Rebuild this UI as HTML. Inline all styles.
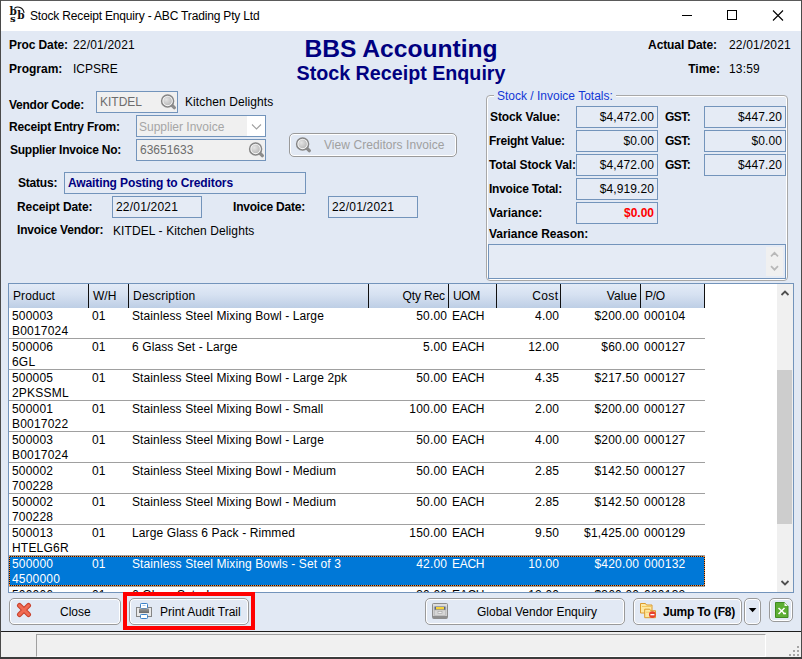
<!DOCTYPE html>
<html><head><meta charset="utf-8">
<style>
html,body{margin:0;padding:0;}
body{width:802px;height:659px;position:relative;overflow:hidden;background:#e2e9f4;font-family:"Liberation Sans",sans-serif;font-size:12px;color:#000;}
.a{position:absolute;white-space:nowrap;line-height:14px;}
.b{font-weight:bold;}
.box{position:absolute;box-sizing:border-box;border:1px solid #7394bb;background:#e5ebf5;line-height:20px;white-space:nowrap;padding:0 4px;}
.dis{background:#f0f0f0;color:#6d6d6d;}
.r{text-align:right;}
.navy{color:#000080;}
#title{position:absolute;left:1px;top:1px;width:800px;height:30px;background:#fff;}
.btn{position:absolute;box-sizing:border-box;border:1px solid #9a9a9a;border-radius:5px;background:#e2e9f4;box-shadow:inset 0 0 0 1px #fff;line-height:14px;white-space:nowrap;}
.mag{position:absolute;}
#grid{position:absolute;left:8px;top:283px;width:786px;height:310px;box-sizing:border-box;border:1px solid #7394bb;background:#fff;overflow:hidden;}
#ghead{position:absolute;left:0;top:0;width:696px;height:24px;background:linear-gradient(#e3ebf7,#d6e1f1 45%,#bdcee5);}
.sep{position:absolute;top:0;width:1px;height:24px;background:#101010;}
.row{position:absolute;left:0;width:696px;height:31px;box-sizing:border-box;border-bottom:1px solid #a0a0a0;}
.row.sel{background:#0078d7;color:#fff;}
.c{position:absolute;white-space:nowrap;line-height:15px;letter-spacing:0.11px;}
#sb{position:absolute;left:768px;top:0;width:16px;height:308px;background:#f0f0f0;}
#thumb{position:absolute;left:0;width:15px;background:#cdcdcd;}
.ln{position:absolute;}
</style></head><body>
<div id="title"></div>
<svg width="0" height="0" style="position:absolute"><defs><radialGradient id="mg" cx="35%" cy="35%" r="75%"><stop offset="0" stop-color="#e4e4e4"/><stop offset="1" stop-color="#b8b8b8"/></radialGradient></defs></svg>
<svg class="mag" style="left:8px;top:4px" width="20" height="22" viewBox="0 0 20 22"><g font-family="DejaVu Serif,Liberation Serif,serif" font-weight="bold" fill="#111"><text x="1.400" y="10.700" font-size="10.500">b</text><text x="1.900" y="18.200" font-size="10">s</text><text x="9.300" y="15.200" font-size="10.500">b</text></g><path d="M6.300 4.400 C9.500 1.800 15 3 16.100 8.800" fill="none" stroke="#111" stroke-width="1.100"/></svg>
<div class="a" id="ttext" style="left:30px;top:8px;font-size:12px;line-height:16px;letter-spacing:-0.17px;">Stock Receipt Enquiry - ABC Trading Pty Ltd</div>
<svg class="mag" style="left:661px;top:1px" width="140" height="30" viewBox="0 0 140 30"><path d="M21 14.5h10" stroke="#000" stroke-width="1"/><rect x="66.5" y="9.5" width="9" height="9" fill="none" stroke="#000" stroke-width="1"/><path d="M112 9.500l10 10M122 9.500l-10 10" stroke="#000" stroke-width="1.100"/></svg>
<div class="a b" style="left:9px;top:38px;letter-spacing:-0.1px;">Proc Date:</div>
<div class="a " style="left:73px;top:38px;letter-spacing:0.18px;">22/01/2021</div>
<div class="a b" style="left:9px;top:62px;">Program:</div>
<div class="a " style="left:73px;top:62px;">ICPSRE</div>
<div class="a b navy" id="h1" style="left:0;width:802px;text-align:center;top:35.3px;font-size:24.6px;line-height:28px;">BBS Accounting</div>
<div class="a b navy" id="h2" style="left:0;width:802px;text-align:center;top:60.700px;font-size:19.700px;line-height:24px;">Stock Receipt Enquiry</div>
<div class="a b" style="right:85px;top:38px;letter-spacing:-0.1px;margin-right:0.1px;">Actual Date:</div>
<div class="a " style="left:729px;top:38px;letter-spacing:0.18px;">22/01/2021</div>
<div class="a b" style="right:82px;top:62px;margin-right:0px;">Time:</div>
<div class="a " style="left:729px;top:62px;letter-spacing:0.15px;">13:59</div>
<div class="a b" style="left:9px;top:98px;letter-spacing:-0.25px;">Vendor Code:</div>
<div class="box dis" style="left:96px;top:91px;width:82px;height:22px;padding-left:3px;">KITDEL</div>
<svg class="mag" style="left:160px;top:93px" width="18" height="18" viewBox="0 0 18 18"><line x1="11.800" y1="12.100" x2="14.300" y2="14.600" stroke="#8c8c8c" stroke-width="3.400" stroke-linecap="round"/><circle cx="7.600" cy="7.900" r="6" fill="#fbfbfb" stroke="#868686" stroke-width="1.500"/><circle cx="7.600" cy="7.900" r="4.300" fill="url(#mg)"/></svg>
<div class="a " style="left:185px;top:95px;letter-spacing:0.1px;">Kitchen Delights</div>
<div class="a b" style="left:9px;top:120px;letter-spacing:-0.2px;">Receipt Entry From:</div>
<div class="box dis" style="left:136px;top:115px;width:130px;height:22px;padding-left:2px;color:#a6a6a6;line-height:22px;">Supplier Invoice</div>
<div class="ln" style="left:247px;top:116px;width:18px;height:20px;background:#fff;"></div><svg class="mag" style="left:247px;top:116px" width="18" height="20"><path d="M5 8.500l4.500 4.500 4.500-4.500" fill="none" stroke="#a0a0a0" stroke-width="1.100"/></svg>
<div class="a b" style="left:10px;top:143px;letter-spacing:-0.25px;">Supplier Invoice No:</div>
<div class="box dis" style="left:136px;top:139px;width:130px;height:22px;padding-left:3px;">63651633</div>
<svg class="mag" style="left:248px;top:141px" width="18" height="18" viewBox="0 0 18 18"><line x1="11.800" y1="12.100" x2="14.300" y2="14.600" stroke="#8c8c8c" stroke-width="3.400" stroke-linecap="round"/><circle cx="7.600" cy="7.900" r="6" fill="#fbfbfb" stroke="#868686" stroke-width="1.500"/><circle cx="7.600" cy="7.900" r="4.300" fill="url(#mg)"/></svg>
<div class="btn" style="left:289px;top:133px;width:168px;height:24px;"></div>
<svg class="mag" style="left:295px;top:136px" width="18" height="18" viewBox="0 0 18 18"><line x1="11.800" y1="12.100" x2="14.300" y2="14.600" stroke="#8c8c8c" stroke-width="3.400" stroke-linecap="round"/><circle cx="7.600" cy="7.900" r="6" fill="#fbfbfb" stroke="#868686" stroke-width="1.500"/><circle cx="7.600" cy="7.900" r="4.300" fill="url(#mg)"/></svg>
<div class="a " style="left:324px;top:138px;letter-spacing:0.06px;color:#a0a0a0;">View Creditors Invoice</div>
<div class="a b" style="left:18px;top:176px;letter-spacing:-0.2px;">Status:</div>
<div class="box b navy" style="left:64px;top:172px;width:242px;height:22px;letter-spacing:-0.12px;padding-left:3px;">Awaiting Posting to Creditors</div>
<div class="a b" style="left:17px;top:200px;letter-spacing:-0.1px;">Receipt Date:</div>
<div class="box " style="left:112px;top:196px;width:90px;height:22px;letter-spacing:0.2px;padding-left:3px;">22/01/2021</div>
<div class="a b" style="left:233px;top:200px;letter-spacing:-0.2px;">Invoice Date:</div>
<div class="box " style="left:328px;top:196px;width:90px;height:22px;letter-spacing:0.2px;padding-left:3px;">22/01/2021</div>
<div class="a b" style="left:17px;top:223px;letter-spacing:-0.2px;">Invoice Vendor:</div>
<div class="a " style="left:113px;top:224px;letter-spacing:0.1px;">KITDEL - Kitchen Delights</div>
<div class="ln" style="left:486px;top:95px;width:302px;height:186px;box-sizing:border-box;border:1px solid #a8a8a8;border-radius:4px;box-shadow:inset 0 0 0 1px #fff;"></div>
<div class="a" style="left:494px;top:89px;padding:0 3px;background:#e2e9f4;color:#1238d6;">Stock / Invoice Totals:</div>
<div class="a b" style="left:490px;top:110px;letter-spacing:-0.1px;">Stock Value:</div>
<div class="box r" style="left:576px;top:106px;width:82px;height:22px;letter-spacing:0.1px;padding-right:3px;">$4,472.00</div>
<div class="a b" style="left:665px;top:110px;letter-spacing:-0.5px;">GST:</div>
<div class="box r" style="left:704px;top:106px;width:82px;height:22px;letter-spacing:0.1px;padding-right:3px;">$447.20</div>
<div class="a b" style="left:489px;top:134px;letter-spacing:-0.25px;">Freight Value:</div>
<div class="box r" style="left:576px;top:130px;width:82px;height:22px;letter-spacing:0.1px;padding-right:3px;">$0.00</div>
<div class="a b" style="left:665px;top:134px;letter-spacing:-0.5px;">GST:</div>
<div class="box r" style="left:704px;top:130px;width:82px;height:22px;letter-spacing:0.1px;padding-right:3px;">$0.00</div>
<div class="a b" style="left:489px;top:158px;letter-spacing:-0.1px;">Total Stock Val:</div>
<div class="box r" style="left:576px;top:154px;width:82px;height:22px;letter-spacing:0.1px;padding-right:3px;">$4,472.00</div>
<div class="a b" style="left:665px;top:158px;letter-spacing:-0.5px;">GST:</div>
<div class="box r" style="left:704px;top:154px;width:82px;height:22px;letter-spacing:0.1px;padding-right:3px;">$447.20</div>
<div class="a b" style="left:489px;top:182px;letter-spacing:-0.25px;">Invoice Total:</div>
<div class="box r" style="left:576px;top:178px;width:82px;height:22px;letter-spacing:0.1px;padding-right:3px;">$4,919.20</div>
<div class="a b" style="left:489px;top:206px;">Variance:</div>
<div class="box r" style="left:576px;top:202px;width:82px;height:22px;color:#ff0000;font-weight:bold;padding-right:3px;">$0.00</div>
<div class="a b" style="left:489px;top:227px;letter-spacing:-0.05px;">Variance Reason:</div>
<div class="box " style="left:488px;top:244px;width:298px;height:35px;"></div>
<div class="ln" style="left:766px;top:247px;width:17px;height:29px;background:#f0f0f0;"></div><svg class="mag" style="left:766px;top:247px" width="17" height="29"><path d="M5 9.300l3.500-3.500 3.500 3.500M5 19.200l3.500 3.500 3.500-3.500" fill="none" stroke="#b8b8b8" stroke-width="1.700"/></svg>
<div id="grid"><div id="ghead"></div>
<div class="sep" style="left:79px"></div><div class="sep" style="left:119px"></div><div class="sep" style="left:359px"></div><div class="sep" style="left:439px"></div><div class="sep" style="left:487px"></div><div class="sep" style="left:551px"></div><div class="sep" style="left:631px"></div><div class="sep" style="left:695px"></div><div class="c" style="left:4px;top:5px;letter-spacing:0.1px;">Product</div><div class="c" style="left:84px;top:5px;letter-spacing:0px;">W/H</div><div class="c" style="left:124px;top:5px;letter-spacing:0.22px;">Description</div><div class="c" style="right:348.15px;top:5px;letter-spacing:-0.15px;">Qty Rec</div><div class="c" style="left:444px;top:5px;letter-spacing:-0.4px;">UOM</div><div class="c" style="right:234.6px;top:5px;letter-spacing:0.4px;">Cost</div><div class="c" style="right:155.9px;top:5px;letter-spacing:0.1px;">Value</div><div class="c" style="left:636px;top:5px;letter-spacing:-0.3px;">P/O</div>
<div class="row" style="top:24px;"><div class="c" style="left:3px;top:1px;letter-spacing:0.2px;">500003<br>B0017024</div><div class="c" style="left:83px;top:1px;letter-spacing:0.2px;">01</div><div class="c" style="left:123px;top:1px;">Stainless Steel Mixing Bowl - Large</div><div class="c" style="right:257.8px;top:1px;letter-spacing:0.2px;">50.00</div><div class="c" style="left:443px;top:1px;letter-spacing:-0.3px;">EACH</div><div class="c" style="right:145.8px;top:1px;letter-spacing:0.2px;">4.00</div><div class="c" style="right:65.8px;top:1px;letter-spacing:0.2px;">$200.00</div><div class="c" style="left:635px;top:1px;letter-spacing:0.25px;">000104</div></div>
<div class="row" style="top:55px;"><div class="c" style="left:3px;top:1px;letter-spacing:0.2px;">500006<br>6GL</div><div class="c" style="left:83px;top:1px;letter-spacing:0.2px;">01</div><div class="c" style="left:123px;top:1px;">6 Glass Set - Large</div><div class="c" style="right:257.8px;top:1px;letter-spacing:0.2px;">5.00</div><div class="c" style="left:443px;top:1px;letter-spacing:-0.3px;">EACH</div><div class="c" style="right:145.8px;top:1px;letter-spacing:0.2px;">12.00</div><div class="c" style="right:65.8px;top:1px;letter-spacing:0.2px;">$60.00</div><div class="c" style="left:635px;top:1px;letter-spacing:0.25px;">000127</div></div>
<div class="row" style="top:86px;"><div class="c" style="left:3px;top:1px;letter-spacing:0.2px;">500005<br>2PKSSML</div><div class="c" style="left:83px;top:1px;letter-spacing:0.2px;">01</div><div class="c" style="left:123px;top:1px;">Stainless Steel Mixing Bowl - Large 2pk</div><div class="c" style="right:257.8px;top:1px;letter-spacing:0.2px;">50.00</div><div class="c" style="left:443px;top:1px;letter-spacing:-0.3px;">EACH</div><div class="c" style="right:145.8px;top:1px;letter-spacing:0.2px;">4.35</div><div class="c" style="right:65.8px;top:1px;letter-spacing:0.2px;">$217.50</div><div class="c" style="left:635px;top:1px;letter-spacing:0.25px;">000127</div></div>
<div class="row" style="top:117px;"><div class="c" style="left:3px;top:1px;letter-spacing:0.2px;">500001<br>B0017022</div><div class="c" style="left:83px;top:1px;letter-spacing:0.2px;">01</div><div class="c" style="left:123px;top:1px;">Stainless Steel Mixing Bowl - Small</div><div class="c" style="right:257.8px;top:1px;letter-spacing:0.2px;">100.00</div><div class="c" style="left:443px;top:1px;letter-spacing:-0.3px;">EACH</div><div class="c" style="right:145.8px;top:1px;letter-spacing:0.2px;">2.00</div><div class="c" style="right:65.8px;top:1px;letter-spacing:0.2px;">$200.00</div><div class="c" style="left:635px;top:1px;letter-spacing:0.25px;">000127</div></div>
<div class="row" style="top:148px;"><div class="c" style="left:3px;top:1px;letter-spacing:0.2px;">500003<br>B0017024</div><div class="c" style="left:83px;top:1px;letter-spacing:0.2px;">01</div><div class="c" style="left:123px;top:1px;">Stainless Steel Mixing Bowl - Large</div><div class="c" style="right:257.8px;top:1px;letter-spacing:0.2px;">50.00</div><div class="c" style="left:443px;top:1px;letter-spacing:-0.3px;">EACH</div><div class="c" style="right:145.8px;top:1px;letter-spacing:0.2px;">4.00</div><div class="c" style="right:65.8px;top:1px;letter-spacing:0.2px;">$200.00</div><div class="c" style="left:635px;top:1px;letter-spacing:0.25px;">000127</div></div>
<div class="row" style="top:179px;"><div class="c" style="left:3px;top:1px;letter-spacing:0.2px;">500002<br>700228</div><div class="c" style="left:83px;top:1px;letter-spacing:0.2px;">01</div><div class="c" style="left:123px;top:1px;">Stainless Steel Mixing Bowl - Medium</div><div class="c" style="right:257.8px;top:1px;letter-spacing:0.2px;">50.00</div><div class="c" style="left:443px;top:1px;letter-spacing:-0.3px;">EACH</div><div class="c" style="right:145.8px;top:1px;letter-spacing:0.2px;">2.85</div><div class="c" style="right:65.8px;top:1px;letter-spacing:0.2px;">$142.50</div><div class="c" style="left:635px;top:1px;letter-spacing:0.25px;">000127</div></div>
<div class="row" style="top:210px;"><div class="c" style="left:3px;top:1px;letter-spacing:0.2px;">500002<br>700228</div><div class="c" style="left:83px;top:1px;letter-spacing:0.2px;">01</div><div class="c" style="left:123px;top:1px;">Stainless Steel Mixing Bowl - Medium</div><div class="c" style="right:257.8px;top:1px;letter-spacing:0.2px;">50.00</div><div class="c" style="left:443px;top:1px;letter-spacing:-0.3px;">EACH</div><div class="c" style="right:145.8px;top:1px;letter-spacing:0.2px;">2.85</div><div class="c" style="right:65.8px;top:1px;letter-spacing:0.2px;">$142.50</div><div class="c" style="left:635px;top:1px;letter-spacing:0.25px;">000128</div></div>
<div class="row" style="top:241px;"><div class="c" style="left:3px;top:1px;letter-spacing:0.2px;">500013<br>HTELG6R</div><div class="c" style="left:83px;top:1px;letter-spacing:0.2px;">01</div><div class="c" style="left:123px;top:1px;">Large Glass 6 Pack - Rimmed</div><div class="c" style="right:257.8px;top:1px;letter-spacing:0.2px;">150.00</div><div class="c" style="left:443px;top:1px;letter-spacing:-0.3px;">EACH</div><div class="c" style="right:145.8px;top:1px;letter-spacing:0.2px;">9.50</div><div class="c" style="right:65.8px;top:1px;letter-spacing:0.2px;">$1,425.00</div><div class="c" style="left:635px;top:1px;letter-spacing:0.25px;">000129</div></div>
<div class="row sel" style="top:272px;"><svg class="mag" style="left:0;top:0" width="696" height="31" shape-rendering="crispEdges"><path d="M0 0.5H696M0 29.5H696M0.5 0V30M695.5 0V30" fill="none" stroke="#101820" stroke-width="1"/><path d="M0 0.5H696M0 29.5H696M0.5 0V30M695.5 0V30" fill="none" stroke="#ff8728" stroke-width="1" stroke-dasharray="1 1"/></svg><div class="c" style="left:3px;top:1px;letter-spacing:0.2px;">500000<br>4500000</div><div class="c" style="left:83px;top:1px;letter-spacing:0.2px;">01</div><div class="c" style="left:123px;top:1px;">Stainless Steel Mixing Bowls - Set of 3</div><div class="c" style="right:257.8px;top:1px;letter-spacing:0.2px;">42.00</div><div class="c" style="left:443px;top:1px;letter-spacing:-0.3px;">EACH</div><div class="c" style="right:145.8px;top:1px;letter-spacing:0.2px;">10.00</div><div class="c" style="right:65.8px;top:1px;letter-spacing:0.2px;">$420.00</div><div class="c" style="left:635px;top:1px;letter-spacing:0.25px;">000132</div></div>
<div class="row" style="top:303px;"><div class="c" style="left:3px;top:1px;letter-spacing:0.2px;">500006<br>6GL</div><div class="c" style="left:83px;top:1px;letter-spacing:0.2px;">01</div><div class="c" style="left:123px;top:1px;">6 Glass Set - Large</div><div class="c" style="right:257.8px;top:1px;letter-spacing:0.2px;">30.00</div><div class="c" style="left:443px;top:1px;letter-spacing:-0.3px;">EACH</div><div class="c" style="right:145.8px;top:1px;letter-spacing:0.2px;">12.00</div><div class="c" style="right:65.8px;top:1px;letter-spacing:0.2px;">$360.00</div><div class="c" style="left:635px;top:1px;letter-spacing:0.25px;">000132</div></div>
<div id="sb"><div id="thumb" style="top:86px;height:154px;"></div><svg class="mag" style="left:0;top:0" width="16" height="308"><path d="M4.500 11l3.500-3.500 3.500 3.500M4.500 297l3.500 3.500 3.500-3.500" fill="none" stroke="#505050" stroke-width="1.800"/></svg></div>
</div>
<div class="btn" style="left:9px;top:598px;width:112px;height:27px;"></div>
<svg class="mag" style="left:16px;top:602px" width="16" height="16" viewBox="0 0 16 16"><path d="M3.500 3.500l9 9M12.500 3.500l-9 9" stroke="#c8402c" stroke-width="5" stroke-linecap="round"/><path d="M3.500 3.500l9 9M12.500 3.500l-9 9" stroke="#f06a52" stroke-width="3" stroke-linecap="round"/></svg>
<div class="a " style="left:60px;top:605px;">Close</div>
<div class="ln" style="left:123px;top:592px;width:132px;height:38px;box-sizing:border-box;border:4px solid #ff0000;"></div>
<div class="btn" style="left:129px;top:598px;width:120px;height:27px;"></div>
<svg class="mag" style="left:135px;top:602px" width="18" height="17" viewBox="0 0 18 17"><defs><linearGradient id="pb" x1="0" y1="0" x2="0" y2="1"><stop offset="0" stop-color="#9a9a9a"/><stop offset="1" stop-color="#6a6a6a"/></linearGradient></defs><rect x="1.500" y="5.500" width="15" height="9" fill="#e9e9e9" stroke="#858585" stroke-width="1"/><rect x="5.500" y="1.500" width="7" height="5" rx="0.800" fill="#fff" stroke="#3a80c8" stroke-width="1"/><path d="M7.500 3.500h3" stroke="#a8ccf4" stroke-width="1"/><rect x="4" y="6.500" width="10" height="4.500" fill="url(#pb)"/><rect x="5.500" y="12.500" width="7" height="4" rx="0.800" fill="#fff" stroke="#3a80c8" stroke-width="1"/></svg>
<div class="a " style="left:160px;top:605px;">Print Audit Trail</div>
<div class="btn" style="left:425px;top:598px;width:200px;height:27px;"></div>
<svg class="mag" style="left:432px;top:603px" width="16" height="16" viewBox="0 0 16 16"><rect x="0.500" y="0.500" width="15" height="15" rx="1" fill="#cfcfcf" stroke="#8c8c8c"/><path d="M1 1h14v2.500H1z" fill="#dcdcdc"/><rect x="2.500" y="3.500" width="11" height="3.500" fill="#5c667c"/><rect x="4" y="4" width="8" height="2.500" fill="#f5d23c"/><rect x="2.500" y="7" width="11" height="5.500" fill="#d6d6d6" stroke="#b4b4b4" stroke-width="0.600"/><rect x="6" y="8.500" width="4" height="2" fill="#efefef" stroke="#a0a0a0" stroke-width="0.600"/><path d="M1 13h14v2.500H1z" fill="#8e8e8e"/></svg>
<div class="a " style="left:477px;top:605px;">Global Vendor Enquiry</div>
<div class="btn" style="left:633px;top:598px;width:109px;height:27px;"></div>
<svg class="mag" style="left:639px;top:602px" width="18" height="18" viewBox="0 0 18 18"><path d="M1.500 1.500h5l1 1.500h5.500v8h-11.500z" fill="#fde9a4" stroke="#dc9a2c" stroke-width="1"/><path d="M3 4.500h9" stroke="#f3c860" stroke-width="1"/><path d="M5.700 7.200h5l1 1.500h4.800v7h-10.800z" fill="#fde9a4" stroke="#dc9a2c" stroke-width="1"/><path d="M7 10.200h8.500" stroke="#f3c860" stroke-width="1"/><circle cx="13.400" cy="12.600" r="3.400" fill="#e8432e"/><rect x="11.400" y="12" width="4" height="1.300" fill="#fff"/></svg>
<div class="a b" style="left:663px;top:605px;letter-spacing:-0.2px;">Jump To (F8)</div>
<div class="btn" style="left:744px;top:598px;width:17px;height:27px;"></div>
<svg class="mag" style="left:744px;top:598px" width="17" height="27"><path d="M4.800 10h7.600l-3.800 4.200z" fill="#000"/></svg>
<div class="btn" style="left:769px;top:598px;width:24px;height:24px;"></div>
<svg class="mag" style="left:775px;top:602px" width="14" height="16" viewBox="0 0 14 16"><path d="M0.500 0.500h9l3.500 3.500v11.500h-12.500z" fill="#5cae34" stroke="#3f8a22"/><path d="M9.500 0.500v3.500h3.500z" fill="#f2f8ec"/><path d="M3.500 6l6.500 6M9.500 6l-6 6M8 11.500h3" stroke="#fff" stroke-width="1.500" fill="none"/></svg>
<div class="ln" style="left:1px;top:631px;width:800px;height:1px;background:#1e1e1e;"></div>
<div class="ln" style="left:1px;top:632px;width:800px;height:25px;background:#f0f0f0;"></div>
<div class="ln" style="left:36px;top:634px;width:730px;height:23px;box-sizing:border-box;border-left:1px solid #a0a0a0;border-top:1px solid #a0a0a0;border-right:1px solid #fff;border-bottom:1px solid #fff;"></div>
<svg class="mag" style="left:788px;top:645px" width="12" height="12"><g fill="#a6a6a6"><rect x="9" y="1" width="2" height="2"/><rect x="5" y="5" width="2" height="2"/><rect x="9" y="5" width="2" height="2"/><rect x="1" y="9" width="2" height="2"/><rect x="5" y="9" width="2" height="2"/><rect x="9" y="9" width="2" height="2"/></g></svg>
<div class="ln" style="left:0;top:0;width:802px;height:1px;background:#5a5a5a;"></div>
<div class="ln" style="left:0;top:0;width:1px;height:659px;background:#4a4a4a;"></div>
<div class="ln" style="left:801px;top:0;width:1px;height:659px;background:#4a4a4a;"></div>
<div class="ln" style="left:0;top:657px;width:802px;height:2px;background:#3c3c3c;"></div>
</body></html>
